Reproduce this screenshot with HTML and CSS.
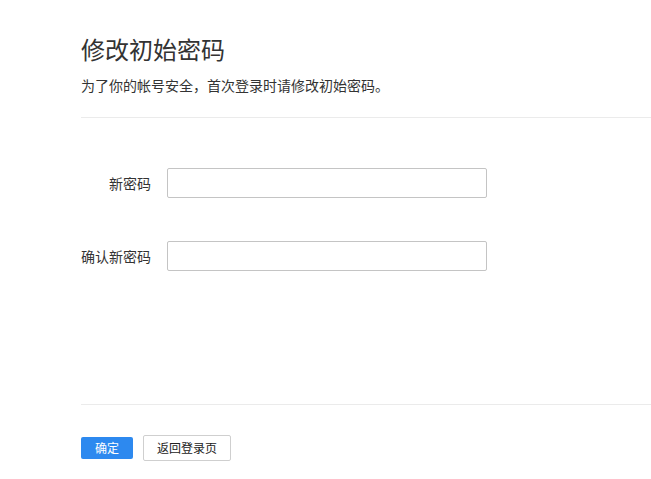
FILE: index.html
```html
<!DOCTYPE html>
<html lang="zh-CN">
<head>
<meta charset="utf-8">
<link rel="stylesheet" href="styles.css">
</head>
<body>
<div class="page">
  <header class="head">
    <h1 class="title">修改初始密码</h1>
    <p class="desc">为了你的帐号安全，首次登录时请修改初始密码。</p>
  </header>
  <form class="form">
    <div class="row">
      <label class="label">新密码</label>
      <input class="input" type="password">
    </div>
    <div class="row">
      <label class="label">确认新密码</label>
      <input class="input" type="password">
    </div>
  </form>
  <footer class="actions">
    <button class="btn btn-primary" type="button">确定</button>
    <button class="btn btn-default" type="button">返回登录页</button>
  </footer>
</div>
</body>
</html>
```
FILE: styles.css
```css
html, body {
  margin: 0;
  padding: 0;
  background: #fff;
}
body {
  font-family: "Noto Sans CJK SC", "Noto Sans", sans-serif;
  color: #333;
}
.page {
  padding-left: 81px;
}
.head {
  border-bottom: 1px solid #ebebeb;
  padding-top: 32px;
  box-sizing: border-box;
  height: 118px;
}
.title {
  margin: 0;
  font-size: 24px;
  font-weight: normal;
  line-height: 34px;
  color: #333;
}
.desc {
  margin: 9px 0 0;
  font-size: 14px;
  line-height: 20px;
  color: #333;
}
.form {
  height: 287px;
  box-sizing: border-box;
  border-bottom: 1px solid #ebebeb;
  padding-top: 50px;
  display: flex;
  flex-direction: column;
  gap: 43px;
}
.row {
  display: flex;
  align-items: center;
}
.label {
  width: 70px;
  text-align: right;
  font-size: 14px;
  color: #333;
  margin-right: 16px;
}
.input {
  width: 320px;
  height: 30px;
  box-sizing: border-box;
  border: 1px solid #c4c4c4;
  border-radius: 2px;
  margin: 0;
  padding: 0 8px;
  outline: none;
}
.actions {
  display: flex;
  align-items: center;
  gap: 10px;
  padding-top: 30px;
}
.btn {
  font-family: "Noto Sans CJK SC", sans-serif;
  font-size: 12px;
  margin: 0;
  cursor: pointer;
  box-sizing: border-box;
  border-radius: 2px;
  padding: 0;
  line-height: 1;
}
.btn-primary {
  width: 52px;
  height: 22px;
  background: #2d89ef;
  border: none;
  color: #fff;
}
.btn-default {
  width: 88px;
  height: 26px;
  background: #fff;
  border: 1px solid #cfcfcf;
  color: #222;
}
```
